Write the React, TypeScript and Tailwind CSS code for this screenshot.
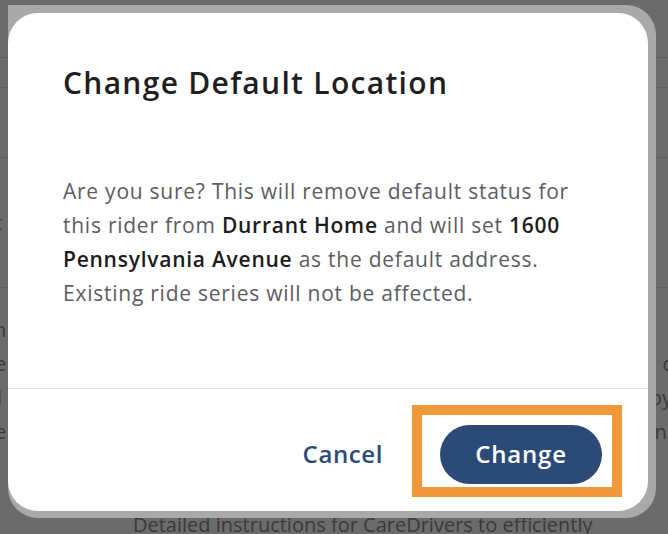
import React from "react";

export default function App() {
  const font = { fontFamily: "'Open Sans', 'Noto Sans', sans-serif" };
  return (
    <div className="relative w-[668px] h-[534px] overflow-hidden bg-[#6b6b6b]" style={font}>
      {/* dimmed page content behind the scrim */}
      <div className="absolute inset-0 flex flex-col text-[20px] text-[#3a3a3a]">
        <div className="h-[58px] shrink-0 border-b border-[#5f5f5f]" />
        <div className="h-[30px] shrink-0 border-b border-[#5f5f5f]" />
        <div className="h-[70px] shrink-0 border-b border-[#5f5f5f]" />
        <div className="flex h-[130px] shrink-0 flex-col justify-center border-b border-[#5f5f5f]">
          <span className="-ml-[5px]">t</span>
        </div>
        <div className="flex h-[223px] shrink-0 flex-col gap-[6px] pt-[28px] leading-[28px]">
          <div className="flex justify-between"><span className="-ml-[6px]">n</span><span /></div>
          <div className="flex justify-between"><span className="-ml-[5px]">e</span><span className="-mr-[4px]">c</span></div>
          <div className="flex justify-between"><span className="-ml-[3px]">l</span><span className="-mr-[4px]">py</span></div>
          <div className="flex justify-between"><span className="-ml-[5px]">e</span><span className="-mr-[4px]">n.</span></div>
        </div>
        <div className="shrink-0 pl-[133px] leading-[28px] whitespace-nowrap">Detailed instructions for CareDrivers to efficiently</div>
      </div>

      {/* modal layer */}
      <div className="absolute left-[8px] top-[5px] w-[648px] h-[513px] bg-[#a9a9a9] rounded-tr-[30px] rounded-br-[30px] rounded-bl-[30px]">
        <div className="mt-[8px] w-[640px] h-[498px] bg-white rounded-[30px] flex flex-col">
          <div className="px-[55px] pt-[50px] flex-1">
            <h1 className="text-[30px] leading-[40px] font-semibold tracking-[1.3px] text-[#1f1f1f] whitespace-nowrap">
              Change Default Location
            </h1>
            <p className="mt-[71px] text-[21px] leading-[34px] tracking-[0.75px] text-[#5c5c62] whitespace-nowrap">
              Are you sure? This will remove default status for
              <br />
              this rider from <span className="font-semibold text-[#1c1c1c]">Durrant Home</span> and will set{" "}
              <span className="font-semibold text-[#1c1c1c]">1600</span>
              <br />
              <span className="font-semibold text-[#1c1c1c]">Pennsylvania Avenue</span> as the default address.
              <br />
              Existing ride series will not be affected.
            </p>
          </div>
          <div className="h-[123px] border-t border-[#e1e2ea] flex items-center justify-end pr-[46px] pt-[8px] gap-[57px]">
            <button className="text-[24px] font-semibold tracking-[0.6px] text-[#2b4a78]">Cancel</button>
            <div className="relative">
              <div className="absolute -left-[28px] -right-[20px] -top-[20px] -bottom-[13px] border-[10px] border-[#f0993a]" />
              <button className="relative w-[162px] h-[59px] rounded-full bg-[#2b4a78] text-white text-[24px] font-semibold tracking-[0.8px]">
                Change
              </button>
            </div>
          </div>
        </div>
      </div>
    </div>
  );
}
